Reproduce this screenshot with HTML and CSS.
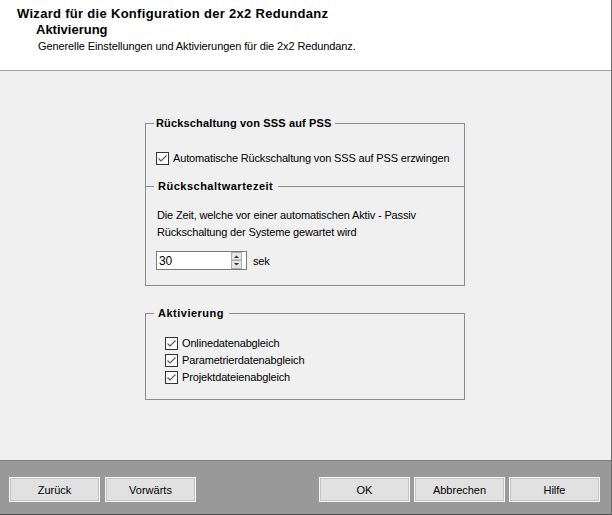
FILE: index.html
```html
<!DOCTYPE html>
<html lang="de">
<head>
  <meta charset="UTF-8" />
  <meta name="viewport" content="width=device-width, initial-scale=1.0">
  <title>Wizard für die Konfiguration der 2x2 Redundanz</title>
  <link rel="stylesheet" href="styles.css">
</head>
<body>
  <div class="window">

    <div class="head">
      <div class="head-title">Wizard für die Konfiguration der 2x2 Redundanz</div>
      <div class="head-page">Aktivierung</div>
      <div class="head-desc">Generelle Einstellungen und Aktivierungen für die 2x2 Redundanz.</div>
    </div>

    <div class="content">
      <fieldset class="group">
        <legend>Rückschaltung von SSS auf PSS</legend>
        <label class="check check-main">
          <svg class="box" width="13" height="13" viewBox="0 0 13 13"><rect x="0.5" y="0.5" width="12" height="12" fill="#fff" stroke="#333"/><polyline points="2.5,6.5 5,9 10.5,3.5" fill="none" stroke="#555" stroke-width="1.1"/></svg>
          Automatische Rückschaltung von SSS auf PSS erzwingen
        </label>

        <fieldset class="subgroup">
          <legend>Rückschaltwartezeit</legend>
          <p class="desc">Die Zeit, welche vor einer automatischen Aktiv - Passiv<br>Rückschaltung der Systeme gewartet wird</p>
          <div class="spin-row">
            <div class="spin">
              <span class="spin-val">30</span>
              <svg class="spin-btns" width="11" height="17" viewBox="0 0 11 17">
                <rect x="0.5" y="0.5" width="10" height="7.5" fill="#e6e6e6" stroke="#adadad"/>
                <rect x="0.5" y="8.5" width="10" height="8" fill="#e6e6e6" stroke="#adadad"/>
                <polygon points="3,6 8,6 5.5,3.5" fill="#333"/>
                <polygon points="3,11 8,11 5.5,13.5" fill="#333"/>
              </svg>
            </div>
            <span>sek</span>
          </div>
        </fieldset>
      </fieldset>

      <fieldset class="group group-act">
        <legend>Aktivierung</legend>
        <label class="check">
          <svg class="box" width="13" height="13" viewBox="0 0 13 13"><rect x="0.5" y="0.5" width="12" height="12" fill="#fff" stroke="#333"/><polyline points="2.5,6.5 5,9 10.5,3.5" fill="none" stroke="#555" stroke-width="1.1"/></svg>
          Onlinedatenabgleich
        </label>
        <label class="check">
          <svg class="box" width="13" height="13" viewBox="0 0 13 13"><rect x="0.5" y="0.5" width="12" height="12" fill="#fff" stroke="#333"/><polyline points="2.5,6.5 5,9 10.5,3.5" fill="none" stroke="#555" stroke-width="1.1"/></svg>
          Parametrierdatenabgleich
        </label>
        <label class="check">
          <svg class="box" width="13" height="13" viewBox="0 0 13 13"><rect x="0.5" y="0.5" width="12" height="12" fill="#fff" stroke="#333"/><polyline points="2.5,6.5 5,9 10.5,3.5" fill="none" stroke="#555" stroke-width="1.1"/></svg>
          Projektdateienabgleich
        </label>
      </fieldset>
    </div>

    <div class="foot">
      <div class="btn-group btn-left">
        <button>Zurück</button>
        <button>Vorwärts</button>
      </div>
      <div class="btn-group">
        <button>OK</button>
        <button>Abbrechen</button>
        <button>Hilfe</button>
      </div>
    </div>

  </div>
</body>
</html>
```

FILE: styles.css
```css
* {
  box-sizing: border-box;
}
body {
  margin: 0;
  font-family: 'Liberation Sans', Arial, sans-serif;
  font-size: 11px;
  color: #000;
  background: #f0f0f0;
}
.window {
  width: 612px;
  height: 515px;
  display: flex;
  flex-direction: column;
  border-right: 1px solid #6b6b6b;
  border-bottom: 1px solid #4c4c4c;
}
.head {
  height: 71px;
  flex: none;
  background: #fff;
  border-bottom: 1px solid #a0a0a0;
  padding: 6px 0 0 17px;
}
.head-title {
  font-size: 13px;
  font-weight: bold;
  line-height: 16px;
  letter-spacing: 0.3px;
}
.head-page {
  font-size: 13px;
  font-weight: bold;
  line-height: 16px;
  margin-left: 19px;
}
.head-desc {
  line-height: 16px;
  margin-left: 21px;
  letter-spacing: -0.1px;
}
.content {
  flex: 1;
  background: #f0f0f0;
  padding-top: 45px;
  letter-spacing: -0.15px;
}
.group {
  width: 320px;
  margin: 0 0 0 145px;
  padding: 0 0 15px;
  border: 1px solid #8c8c8c;
}
.group legend,
.subgroup legend {
  font-weight: bold;
  line-height: 14px;
  margin-left: 8px;
  padding: 0 3px 0 2px;
  letter-spacing: 0.15px;
}
.subgroup legend,
.group-act legend {
  padding: 0 5px 0 4px;
  letter-spacing: 0.5px;
}
.check {
  display: flex;
  align-items: center;
  gap: 4px;
  height: 13px;
  line-height: 13px;
}
.check .box {
  flex: none;
}
.check-main {
  margin: 22px 0 0 10px;
}
.subgroup {
  margin: 14px 0 0;
  padding: 0;
  border: none;
  border-top: 1px solid #8c8c8c;
}
.desc {
  margin: 14px 0 0 11px;
  line-height: 17px;
}
.spin-row {
  display: flex;
  align-items: center;
  gap: 6px;
  margin: 10px 0 0 10px;
}
.spin {
  width: 91px;
  height: 19px;
  display: flex;
  align-items: center;
  justify-content: space-between;
  background: #fff;
  border: 1px solid #7a7a7a;
  padding: 0 4px 0 2px;
  font-size: 12px;
}
.group-act {
  margin-top: 20px;
}
.group-act .check {
  margin-left: 19px;
}
.group-act .check:first-of-type {
  margin-top: 17px;
}
.group-act .check + .check {
  margin-top: 4px;
}
.foot {
  height: 54px;
  flex: none;
  display: flex;
  justify-content: space-between;
  background: #999;
  border-top: 1px solid #808080;
  padding: 16px 11px 0 9px;
}
.btn-group {
  display: flex;
  gap: 4px;
}
.btn-left {
  gap: 5px;
}
.btn-group button {
  width: 91px;
  height: 25px;
  font-family: inherit;
  font-size: 11px;
  color: #000;
  background: #e1e1e1;
  border: 1px solid #f6f6f6;
  box-shadow: inset 0 0 0 1px #c4c4c4;
  padding: 0;
}
```
